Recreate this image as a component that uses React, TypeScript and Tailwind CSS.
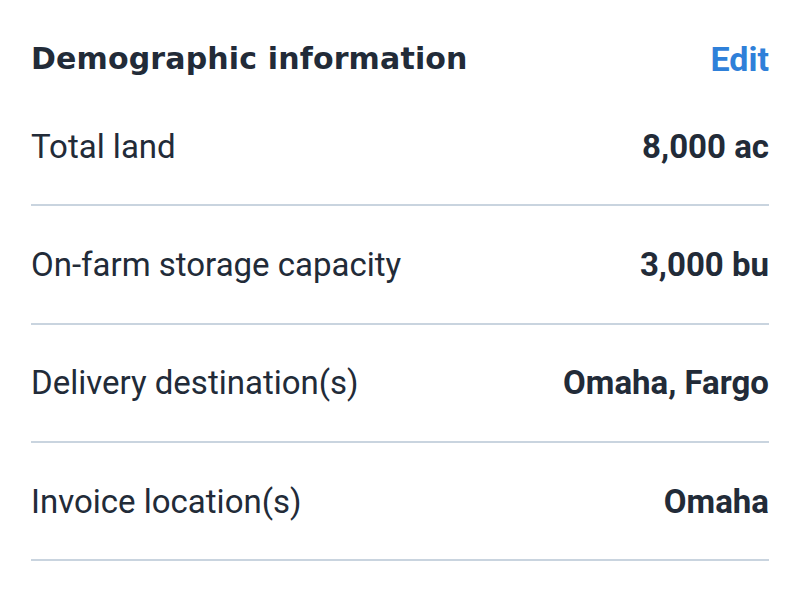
const rows = [
  { label: "Total land", value: "8,000 ac" },
  { label: "On-farm storage capacity", value: "3,000 bu" },
  { label: "Delivery destination(s)", value: "Omaha, Fargo" },
  { label: "Invoice location(s)", value: "Omaha" },
];

export default function App() {
  return (
    <div className="w-[800px] h-[600px] bg-white px-[31px] pt-[36px] text-[#222b38]">
      <div className="flex items-center justify-between h-[44px]">
        <h2 className="font-['DejaVu_Sans',sans-serif] font-bold text-[30px] tracking-[0.15px]">
          Demographic information
        </h2>
        <button className="font-['Roboto',sans-serif] font-bold text-[34px] text-[#2f80d9] pt-[3px]">
          Edit
        </button>
      </div>
      <div className="font-['Roboto',sans-serif] text-[33px] mt-[8px]">
        {rows.map((row) => (
          <div
            key={row.label}
            className="flex items-center justify-between h-[118.3px] border-b-2 border-[#c9d4df] pt-[1px]"
          >
            <span>{row.label}</span>
            <span className="font-bold">{row.value}</span>
          </div>
        ))}
      </div>
    </div>
  );
}
